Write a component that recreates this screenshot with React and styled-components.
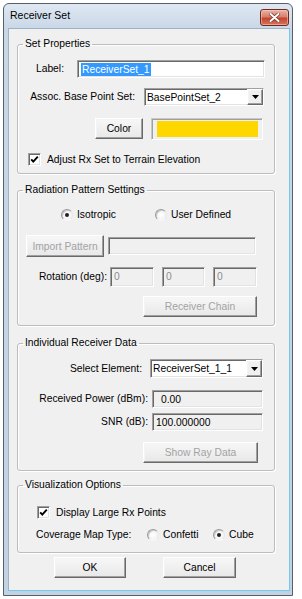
import React from 'react';
import styled, { createGlobalStyle, css } from 'styled-components';

const Global = createGlobalStyle`
  html, body { margin: 0; padding: 0; background: #fff; }
  body {
    font-family: "Liberation Sans", Arial, sans-serif;
    font-size: 10.3px;
    color: #000;
  }
  #root { width: 302px; height: 599px; }
`;

const sunken = css`
  border: 1px solid;
  border-color: #a0a0a0 #ffffff #ffffff #a0a0a0;
  box-shadow: inset 1px 1px 0 #696969, inset -1px -1px 0 #e3e3e3;
`;

const raised = css`
  border: 1px solid;
  border-color: #ffffff #696969 #696969 #ffffff;
  box-shadow: inset -1px -1px 0 #a0a0a0, inset 1px 1px 0 #f4f4f4;
`;

const Window = styled.div`
  box-sizing: border-box;
  margin: 3px 0 0 3px;
  width: 290px;
  height: 593px;
  border: 1px solid #56606c;
  border-radius: 6px 6px 0 0;
  background: linear-gradient(#dfe8f3, #c8d6e6 26px, #c3d2e3);
  padding: 0 2px 4px 4px;
  display: flex;
  flex-direction: column;
`;

const TitleBar = styled.div`
  height: 24px;
  box-sizing: border-box;
  padding: 4px 1px 0 2px;
  display: flex;
  align-items: flex-start;
  justify-content: space-between;
`;

const TitleText = styled.span`
  line-height: 14px;
  font-size: 10.5px;
  color: #000;
`;

const CloseButton = styled.button`
  box-sizing: border-box;
  margin: 1px 0 0 0;
  padding: 0;
  width: 29px;
  height: 17px;
  border: 1px solid #6f2a20;
  border-radius: 3px;
  background: linear-gradient(#eab2a4, #d9806c 45%, #c5452f 55%, #d2765c);
  box-shadow: inset 0 0 0 1px rgba(255, 220, 210, 0.45);
  display: flex;
  align-items: center;
  justify-content: center;
`;

const Panel = styled.div`
  flex: 1;
  box-sizing: border-box;
  background: #f0f0f0;
  border: 1px solid;
  border-color: #9fb1c4 #72cbea #72cbea #9fb1c4;
  padding: 8px 0 0 8px;
  display: flex;
  flex-direction: column;
  align-items: flex-start;
`;

const Group = styled.fieldset`
  box-sizing: border-box;
  width: 258px;
  min-width: 0;
  margin: ${(p) => p.$mt}px 0 0 0;
  padding: 0 0 ${(p) => p.$pb}px 0;
  border: 1px solid #bcbcbc;
  border-radius: 3px;
  box-shadow: inset 1px 1px 0 #ffffff, 1px 1px 0 #ffffff;
  display: flex;
  flex-direction: column;
`;

const Legend = styled.legend`
  margin-left: 5px;
  padding: 0 2px;
  line-height: 14px;
  font-size: 10.3px;
`;

const Row = styled.div`
  display: flex;
  align-items: ${(p) => p.$align || 'center'};
  height: ${(p) => p.$h}px;
  margin-top: ${(p) => p.$mt}px;
  padding-left: ${(p) => p.$pl || 0}px;
  gap: ${(p) => p.$gap || 0}px;
`;

const Label = styled.span`
  width: ${(p) => p.$w}px;
  flex: none;
  text-align: ${(p) => p.$align || 'right'};
  line-height: 14px;
  white-space: nowrap;
`;

const Text = styled.span`
  line-height: 14px;
  white-space: nowrap;
`;

const Field = styled.div`
  box-sizing: border-box;
  width: ${(p) => p.$w}px;
  height: ${(p) => p.$h}px;
  flex: none;
  ${sunken};
  background: ${(p) => p.$bg || '#ffffff'};
  color: ${(p) => p.$color || '#000'};
  padding: ${(p) => (p.$top ? '2px' : '0')} 0 0 ${(p) => p.$pl ?? 3}px;
  display: flex;
  align-items: ${(p) => (p.$top ? 'flex-start' : 'center')};
  line-height: 13px;
  white-space: nowrap;
`;

const Selection = styled.span`
  background: #3399ff;
  color: #fff;
  padding: 0 1px;
`;

const Combo = styled.div`
  box-sizing: border-box;
  width: ${(p) => p.$w}px;
  height: ${(p) => p.$h}px;
  flex: none;
  ${sunken};
  background: #fff;
  display: flex;
  align-items: stretch;
`;

const ComboText = styled.span`
  flex: 1;
  padding-left: 2px;
  display: flex;
  align-items: center;
  line-height: 13px;
  white-space: nowrap;
`;

const DropButton = styled.span`
  box-sizing: border-box;
  width: 16px;
  flex: none;
  ${raised};
  background: #f0f0f0;
  display: flex;
  align-items: center;
  justify-content: center;
`;

const Button = styled.button`
  box-sizing: border-box;
  flex: none;
  width: ${(p) => p.$w}px;
  height: ${(p) => p.$h || 21}px;
  margin: 0;
  padding: 0;
  font: inherit;
  font-size: 10.3px;
  color: ${(p) => (p.disabled ? '#a3a3a3' : '#000')};
  background: linear-gradient(#f7f7f7, #e8e8e8);
  ${raised};
`;

const Swatch = styled.div`
  box-sizing: border-box;
  width: ${(p) => p.$w}px;
  height: 22px;
  flex: none;
  ${sunken};
  border-color: #c8c8c8 #ffffff #ffffff #c8c8c8;
  box-shadow: inset 1px 1px 0 #a0a0a0;
  background: #f0f0f0;
  padding: 2px 4px 2px 5px;
  display: flex;
`;

const SwatchFill = styled.div`
  flex: 1;
  background: ${(p) => p.$color};
`;

const CheckBox = styled.span`
  box-sizing: border-box;
  width: 13px;
  height: 13px;
  flex: none;
  ${sunken};
  background: #fff;
  display: flex;
  align-items: center;
  justify-content: center;
`;

const RadioOption = styled.span`
  display: flex;
  align-items: center;
  gap: 4px;
  width: ${(p) => (p.$w ? `${p.$w}px` : 'auto')};
  flex: none;
`;

const RadioCircle = styled.span`
  box-sizing: border-box;
  width: 12px;
  height: 12px;
  flex: none;
  border-radius: 50%;
  border: 1px solid;
  border-color: #9a9a9a #e8e8e8 #f8f8f8 #9a9a9a;
  background: radial-gradient(circle at 50% 50%, #ffffff 0, #f4f4f4 60%, #e6e6e6 100%);
  box-shadow: inset 1px 1px 0 #c9c9c9;
  display: flex;
  align-items: center;
  justify-content: center;
  &::after {
    content: '';
    width: 4px;
    height: 4px;
    border-radius: 50%;
    background: ${(p) => (p.$checked ? '#222' : 'transparent')};
  }
`;

const ButtonBar = styled.div`
  display: flex;
  gap: 37px;
  margin-top: 4px;
  padding-left: 37px;
`;

const Check = () => (
  <CheckBox>
    <svg width="9" height="9" viewBox="0 0 9 9">
      <polyline points="1.2,4.3 3.3,6.6 7.8,1.6" fill="none" stroke="#000" strokeWidth="1.9" />
    </svg>
  </CheckBox>
);

const Arrow = () => (
  <svg width="7" height="4" viewBox="0 0 7 4">
    <polygon points="0,0 7,0 3.5,4" fill="#000" />
  </svg>
);

const Radio = ({ checked, label, w }) => (
  <RadioOption $w={w}>
    <RadioCircle $checked={checked} />
    <Text>{label}</Text>
  </RadioOption>
);

export default function App() {
  return (
    <>
      <Global />
      <Window>
        <TitleBar>
          <TitleText>Receiver Set</TitleText>
          <CloseButton aria-label="Close">
            <svg width="11" height="9" viewBox="0 0 11 9">
              <path d="M1.5 1 L9.5 8 M9.5 1 L1.5 8" stroke="#7a3328" strokeWidth="3.4" strokeLinecap="round" />
              <path d="M1.5 1 L9.5 8 M9.5 1 L1.5 8" stroke="#ffffff" strokeWidth="2" strokeLinecap="round" />
            </svg>
          </CloseButton>
        </TitleBar>
        <Panel>
          <Group $mt={0} $pb={7}>
            <Legend>Set Properties</Legend>
            <Row $mt={9} $h={18} $gap={13}>
              <Label $w={46}>Label:</Label>
              <Field $w={188} $h={18}>
                <Selection>ReceiverSet_1</Selection>
              </Field>
            </Row>
            <Row $mt={10} $h={18} $gap={9}>
              <Label $w={117}>Assoc. Base Point Set:</Label>
              <Combo $w={120} $h={18}>
                <ComboText>BasePointSet_2</ComboText>
                <DropButton><Arrow /></DropButton>
              </Combo>
            </Row>
            <Row $mt={12} $h={22} $pl={77} $gap={8} $align="flex-start">
              <Button $w={48} $h={21}>Color</Button>
              <Swatch $w={112}>
                <SwatchFill $color="#ffd700" />
              </Swatch>
            </Row>
            <Row $mt={13} $h={13} $pl={10} $gap={6}>
              <Check />
              <Text>Adjust Rx Set to Terrain Elevation</Text>
            </Row>
          </Group>

          <Group $mt={9} $pb={8}>
            <Legend>Radiation Pattern Settings</Legend>
            <Row $mt={11} $h={14} $pl={43}>
              <Radio checked label="Isotropic" w={94} />
              <Radio label="User Defined" />
            </Row>
            <Row $mt={13} $h={22} $pl={8} $gap={4}>
              <Button $w={78} $h={22} disabled>Import Pattern</Button>
              <Field $w={148} $h={18} $bg="#f0f0f0" />
            </Row>
            <Row $mt={10} $h={20} $gap={3}>
              <Label $w={89}>Rotation (deg):</Label>
              <Row $mt={0} $h={20} $gap={8}>
                <Field $w={44} $h={20} $bg="#f0f0f0" $color="#8d8d8d" $top $pl={3}>0</Field>
                <Field $w={43} $h={20} $bg="#f0f0f0" $color="#8d8d8d" $top $pl={3}>0</Field>
                <Field $w={44} $h={20} $bg="#f0f0f0" $color="#8d8d8d" $top $pl={3}>0</Field>
              </Row>
            </Row>
            <Row $mt={9} $h={21} $pl={125}>
              <Button $w={114} $h={21} disabled>Receiver Chain</Button>
            </Row>
          </Group>

          <Group $mt={10} $pb={7}>
            <Legend>Individual Receiver Data</Legend>
            <Row $mt={9} $h={19} $gap={8}>
              <Label $w={124}>Select Element:</Label>
              <Combo $w={113} $h={19}>
                <ComboText>ReceiverSet_1_1</ComboText>
                <DropButton><Arrow /></DropButton>
              </Combo>
            </Row>
            <Row $mt={12} $h={18} $gap={4}>
              <Label $w={130}>Received Power (dBm):</Label>
              <Field $w={111} $h={18} $bg="#f0f0f0" $pl={8}>0.00</Field>
            </Row>
            <Row $mt={5} $h={18} $gap={4}>
              <Label $w={130}>SNR (dB):</Label>
              <Field $w={111} $h={18} $bg="#f0f0f0" $pl={3}>100.000000</Field>
            </Row>
            <Row $mt={11} $h={21} $pl={125}>
              <Button $w={115} $h={21} disabled>Show Ray Data</Button>
            </Row>
          </Group>

          <Group $mt={7} $pb={10}>
            <Legend>Visualization Options</Legend>
            <Row $mt={14} $h={13} $pl={19} $gap={6}>
              <Check />
              <Text>Display Large Rx Points</Text>
            </Row>
            <Row $mt={9} $h={14} $pl={18}>
              <Label $w={111} $align="left">Coverage Map Type:</Label>
              <Radio label="Confetti" w={66} />
              <Radio checked label="Cube" />
            </Row>
          </Group>

          <ButtonBar>
            <Button $w={72} $h={21}>OK</Button>
            <Button $w={73} $h={21}>Cancel</Button>
          </ButtonBar>
        </Panel>
      </Window>
    </>
  );
}
